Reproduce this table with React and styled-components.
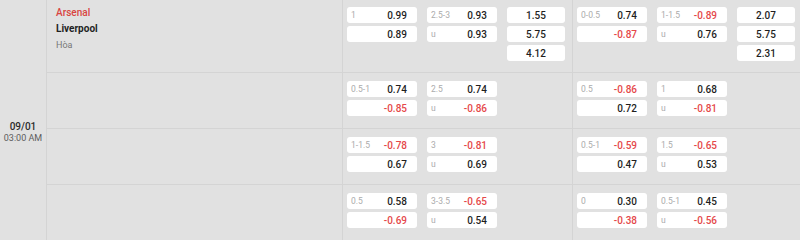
import styled, { createGlobalStyle } from 'styled-components';

const GlobalStyle = createGlobalStyle`
  * { box-sizing: border-box; }
  body {
    margin: 0;
    background: #e1e1e1;
    font-family: Roboto, "Liberation Sans", sans-serif;
  }
`;

const rows = [
	{
		g1: [
			[['1', '0.99'], ['', '0.89']],
			[['2.5-3', '0.93'], ['u', '0.93']],
		],
		x1: ['1.55', '5.75', '4.12'],
		g2: [
			[['0-0.5', '0.74'], ['', '-0.87']],
			[['1-1.5', '-0.89'], ['u', '0.76']],
		],
		x2: ['2.07', '5.75', '2.31'],
	},
	{
		g1: [
			[['0.5-1', '0.74'], ['', '-0.85']],
			[['2.5', '0.74'], ['u', '-0.86']],
		],
		g2: [
			[['0.5', '-0.86'], ['', '0.72']],
			[['1', '0.68'], ['u', '-0.81']],
		],
	},
	{
		g1: [
			[['1-1.5', '-0.78'], ['', '0.67']],
			[['3', '-0.81'], ['u', '0.69']],
		],
		g2: [
			[['0.5-1', '-0.59'], ['', '0.47']],
			[['1.5', '-0.65'], ['u', '0.53']],
		],
	},
	{
		g1: [
			[['0.5', '0.58'], ['', '-0.69']],
			[['3-3.5', '-0.65'], ['u', '0.54']],
		],
		g2: [
			[['0', '0.30'], ['', '-0.38']],
			[['0.5-1', '0.45'], ['u', '-0.56']],
		],
	},
];

const Match = styled.div`
	display: flex;
	width: 800px;
	height: 240px;
	overflow: hidden;
	background: #e1e1e1;
`;

const DateCell = styled.div`
	width: 47px;
	flex-shrink: 0;
	border-right: 1px solid #d4d4d4;
	display: flex;
	flex-direction: column;
	align-items: center;
	justify-content: center;
	padding-top: 24px;
`;

const DateText = styled.div`
	font-size: 10px;
	font-weight: 500;
	line-height: 12px;
	color: #2b2b2b;
`;

const TimeText = styled.div`
	font-size: 9px;
	line-height: 11px;
	color: #5c5c5c;
`;

const Body = styled.div`
	flex: 1;
	display: flex;
	flex-direction: column;
`;

const Row = styled.div`
	display: flex;
	border-bottom: 1px solid #d4d4d4;
`;

const Info = styled.div`
	width: 296px;
	flex-shrink: 0;
	border-right: 1px solid #d4d4d4;
	padding: 5px 9px;
`;

const Team = styled.div`
	font-size: 10px;
	line-height: 16px;
	font-weight: ${(p) => (p.$home ? 500 : 700)};
	color: ${(p) => (p.$home ? '#d9443f' : '#1f1f1f')};
`;

const Draw = styled.div`
	font-size: 9px;
	line-height: 16px;
	color: #777;
`;

const Group = styled.div`
	width: ${(p) => (p.$last ? 'auto' : '230px')};
	flex: ${(p) => (p.$last ? 1 : 'none')};
	border-right: ${(p) => (p.$last ? 'none' : '1px solid #d4d4d4')};
	padding: ${(p) => (p.$first ? '7px 4px 11px' : '8px 4px 12px')};
	display: flex;
	gap: 10px;
	align-items: flex-start;
`;

const Col = styled.div`
	width: ${(p) => (p.$narrow ? '58px' : '70px')};
	display: flex;
	flex-direction: column;
	gap: 3px;
`;

const Box = styled.div`
	height: 16px;
	background: #fff;
	border-radius: 3px;
	display: flex;
	align-items: center;
	justify-content: ${(p) => (p.$center ? 'center' : 'space-between')};
	padding: ${(p) => (p.$center ? '0' : '0 10px 0 4px')};
`;

const Label = styled.span`
	font-size: 8.5px;
	color: #ababab;
`;

const Value = styled.span`
	font-size: 10px;
	font-weight: 500;
	color: ${(p) => (p.$neg ? '#e5484a' : '#1f1f1f')};
`;

const OddsCol = ({ items }) => (
	<Col>
		{items.map(([label, value], i) => (
			<Box key={i}>
				<Label>{label}</Label>
				<Value $neg={value.startsWith('-')}>{value}</Value>
			</Box>
		))}
	</Col>
);

const OddsGroup = ({ cols, x, first, last }) => (
	<Group $first={first} $last={last}>
		{cols.map((c, i) => (
			<OddsCol key={i} items={c} />
		))}
		{x && (
			<Col $narrow>
				{x.map((v, i) => (
					<Box key={i} $center>
						<Value>{v}</Value>
					</Box>
				))}
			</Col>
		)}
	</Group>
);

export default function App() {
	return (
		<>
			<GlobalStyle />
			<Match>
				<DateCell>
					<DateText>09/01</DateText>
					<TimeText>03:00 AM</TimeText>
				</DateCell>
				<Body>
					{rows.map((r, i) => (
						<Row key={i}>
							<Info>
								{i === 0 && (
									<>
										<Team $home>Arsenal</Team>
										<Team>Liverpool</Team>
										<Draw>Hòa</Draw>
									</>
								)}
							</Info>
							<OddsGroup cols={r.g1} x={r.x1} first={i === 0} />
							<OddsGroup cols={r.g2} x={r.x2} first={i === 0} last />
						</Row>
					))}
				</Body>
			</Match>
		</>
	);
}
